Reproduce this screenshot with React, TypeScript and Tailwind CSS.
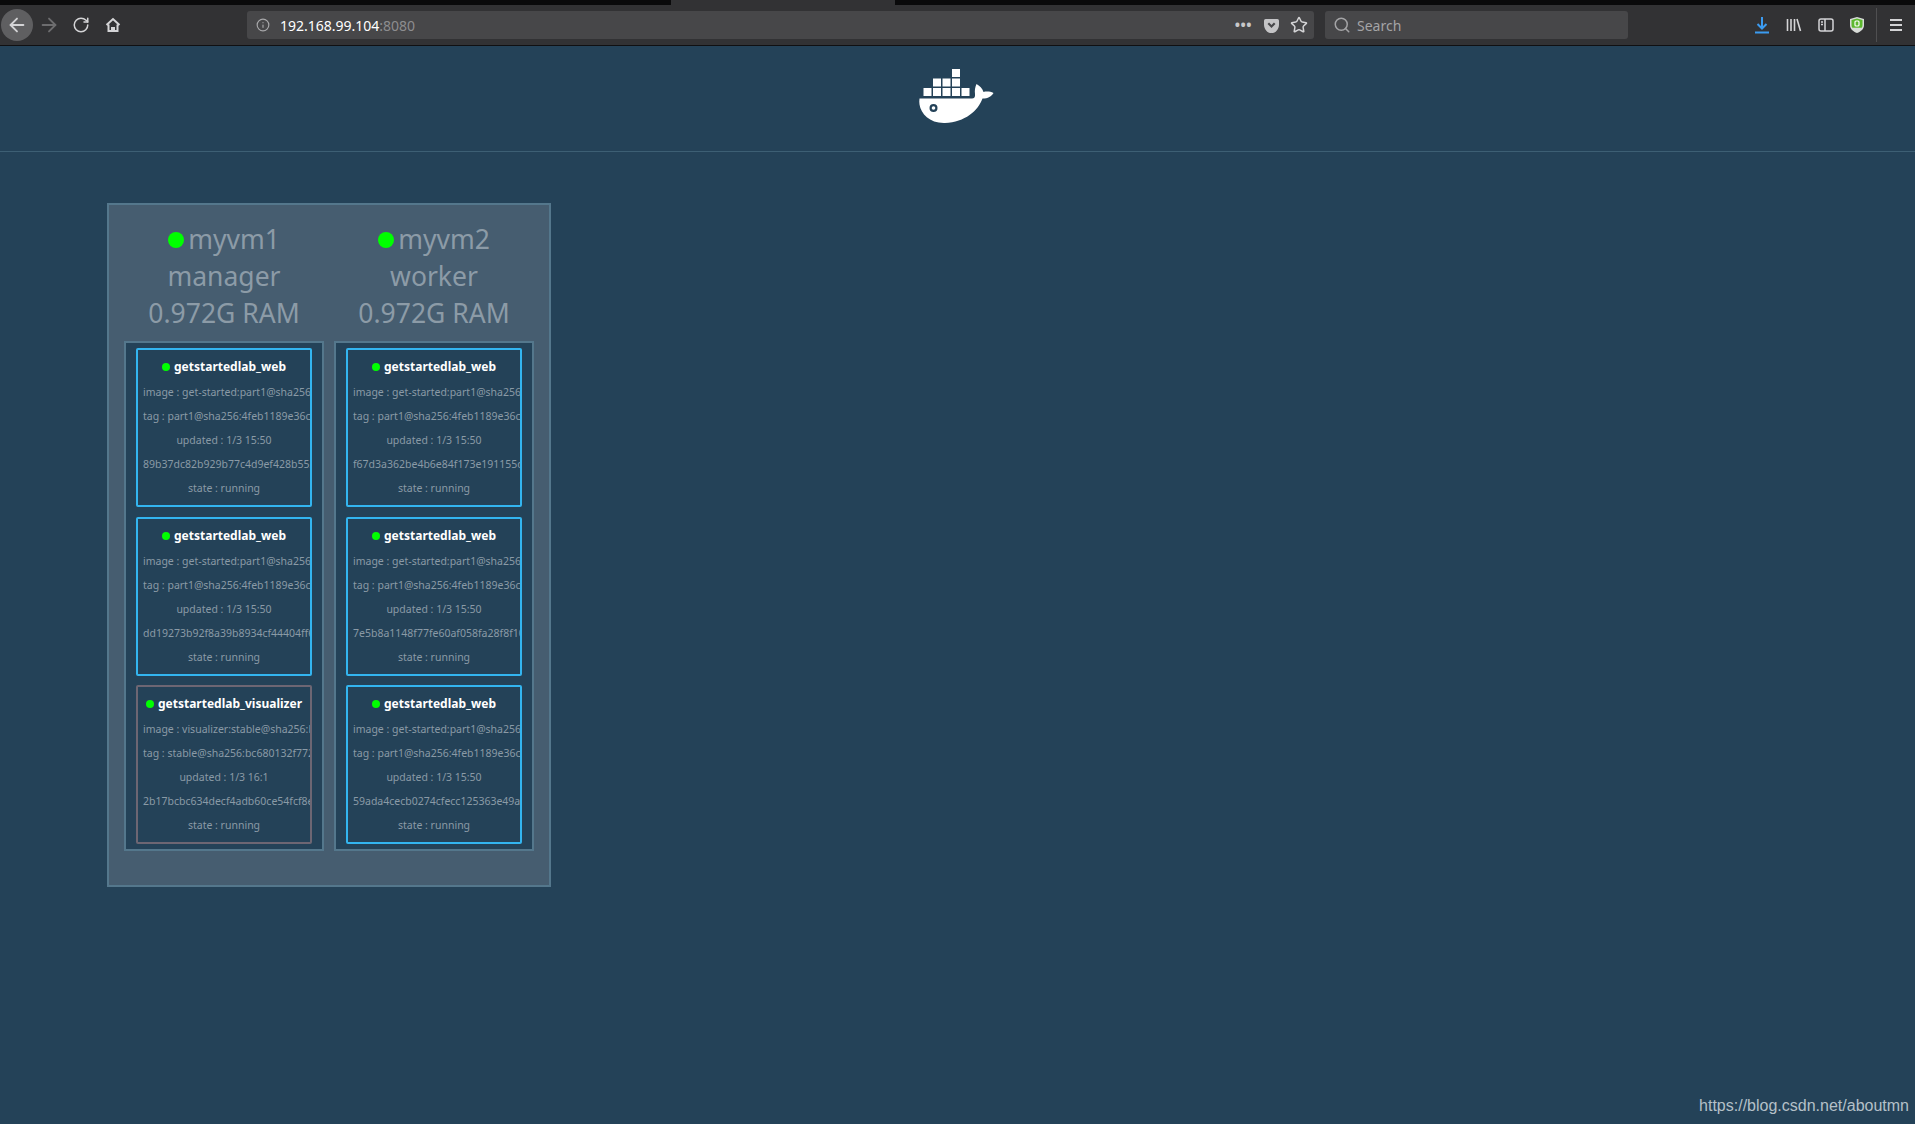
import { ArrowLeft, ArrowRight, RotateCw, Info, Star, Search } from 'lucide-react';

type Task = {
  name: string;
  image: string;
  tag: string;
  updated: string;
  id: string;
  visualizer?: boolean;
};

type Node = {
  name: string;
  role: string;
  tasks: Task[];
};

const web = (id: string): Task => ({
  name: 'getstartedlab_web',
  image: 'get-started:part1@sha256:4feb1189e36cc',
  tag: 'part1@sha256:4feb1189e36cc7a2f4',
  updated: '1/3 15:50',
  id,
});

const nodes: Node[] = [
  {
    name: 'myvm1',
    role: 'manager',
    tasks: [
      web('89b37dc82b929b77c4d9ef428b5520'),
      web('dd19273b92f8a39b8934cf44404ff60'),
      {
        name: 'getstartedlab_visualizer',
        image: 'visualizer:stable@sha256:bc680132f772',
        tag: 'stable@sha256:bc680132f7729e1',
        updated: '1/3 16:1',
        id: '2b17bcbc634decf4adb60ce54fcf8e1a',
        visualizer: true,
      },
    ],
  },
  {
    name: 'myvm2',
    role: 'worker',
    tasks: [
      web('f67d3a362be4b6e84f173e191155d70'),
      web('7e5b8a1148f77fe60af058fa28f8f10a'),
      web('59ada4cecb0274cfecc125363e49a12'),
    ],
  },
];

function Whale() {
  return (
    <svg width="76" height="55" viewBox="0 0 76 55" fill="#fff">
      <rect x="34" y="0" width="8" height="8" />
      <rect x="15" y="9.5" width="8" height="8" />
      <rect x="24.5" y="9.5" width="8" height="8" />
      <rect x="34" y="9.5" width="8" height="8" />
      <rect x="5.5" y="19" width="8" height="8" />
      <rect x="15" y="19" width="8" height="8" />
      <rect x="24.5" y="19" width="8" height="8" />
      <rect x="34" y="19" width="8" height="8" />
      <rect x="43.5" y="19" width="8" height="8" />
      <path
        fillRule="evenodd"
        d="M1.5 29.5H54c2 0 3.5-1.5 3-4.5-.5-3 0-7 1.5-10 3 1.500 6 4.500 7 8 3-.8 7-.5 10 1-2 3.500-5.500 5.500-11 5.500C60 42 47 53 27 54 12 54.500 3 45 1.500 35.500c-.3-2-.3-4 0-6ZM15.500 35a4 4 0 1 0 0 8 4 4 0 0 0 0-8Z"
      />
      <circle cx="15.5" cy="39" r="1.8" />
    </svg>
  );
}

function TaskCard({ task }: { task: Task }) {
  return (
    <div
      className={`h-[159px] overflow-hidden rounded-[2px] border-2 pt-[7px] ${
        task.visualizer ? 'border-[#6d6673]' : 'border-[#33b5f0]'
      }`}
    >
      <div className="flex h-[20px] items-center justify-center text-[12px] font-bold text-white">
        <span className="mr-[4px] h-[8px] w-[8px] rounded-full bg-[#00ff00]" />
        {task.name}
      </div>
      <div className="whitespace-nowrap text-[10.5px] text-[#8a9aa6]">
        <div className="mt-[3px] h-[24px] pl-[5px] leading-[24px]">image : {task.image}</div>
        <div className="h-[24px] pl-[5px] leading-[24px]">tag : {task.tag}</div>
        <div className="h-[24px] text-center leading-[24px]">updated : {task.updated}</div>
        <div className="h-[24px] pl-[5px] leading-[24px]">{task.id}</div>
        <div className="h-[24px] text-center leading-[24px]">state : running</div>
      </div>
    </div>
  );
}

function NodeColumn({ node }: { node: Node }) {
  return (
    <div className="w-[200px]">
      <div className="h-[121px] pt-px text-center text-[26.5px] leading-[37px] text-[#8c9ba7]">
        <div className="flex items-center justify-center">
          <span className="mr-[4px] h-[16px] w-[16px] rounded-full bg-[#00ff00]" />
          {node.name}
        </div>
        <div>{node.role}</div>
        <div>0.972G RAM</div>
      </div>
      <div className="flex h-[510px] flex-col gap-[9.5px] border-2 border-[#54778c] bg-[#244258] px-[10px] pt-[5px]">
        {node.tasks.map((task) => (
          <TaskCard key={task.id} task={task} />
        ))}
      </div>
    </div>
  );
}

function Toolbar() {
  return (
    <div className="flex h-[46px] flex-col bg-[#323234]">
      <div className="flex h-[5px] bg-[#0a0a0b]">
        <div className="ml-[671px] h-full w-[224px] bg-[#323234]" />
      </div>
      <div className="flex h-[40px] items-center text-[#d4d4d6]">
        <div className="ml-px flex h-[32px] w-[32px] items-center justify-center rounded-full bg-[#5f5f61]">
          <ArrowLeft size={22} strokeWidth={2} />
        </div>
        <ArrowRight size={22} strokeWidth={2} className="ml-[5px] text-[#6d6d6f]" />
        <RotateCw size={18} strokeWidth={2} className="ml-[12px]" />
        <svg width="16" height="16" viewBox="0 0 16 16" fill="none" stroke="currentColor" strokeWidth="2" className="ml-[15px]">
          <path d="M1.5 8 8 2l6.5 6M3.5 7.500V14h9V7.500" />
          <path d="M7 14v-3h2v3" />
        </svg>
        <div className="ml-[126px] flex h-[28px] w-[1067px] items-center rounded-[3px] bg-[#474749] pl-[9px] pr-[6px]">
          <Info size={14} className="text-[#a8a8aa]" />
          <span className="ml-[10px] text-[14px] text-white font-['Noto_Sans',sans-serif]">
            192.168.99.104<span className="text-[#8d8d8f]">:8080</span>
          </span>
          <div className="ml-auto flex items-center">
            <span className="text-[14px] font-bold leading-none tracking-[0.5px] text-[#c8c8ca]">•••</span>
            <svg width="15" height="15" viewBox="0 0 14 14" fill="#c4c4c6" className="ml-[12px]">
              <path d="M1.5 1h11A1.500 1.500 0 0 1 14 2.500V6c0 4.500-3 8-7 8S0 10.500 0 6V2.500A1.500 1.500 0 0 1 1.500 1Z" />
              <path d="m4 5 3 3 3-3" fill="none" stroke="#474749" strokeWidth="2" />
            </svg>
            <Star size={18} strokeWidth={2} className="ml-[11px]" />
          </div>
        </div>
        <div className="ml-[11px] flex h-[28px] w-[303px] items-center rounded-[3px] bg-[#474749] pl-[8px] text-[14px] text-[#a4a4a6]">
          <Search size={18} />
          <span className="ml-[6px]">Search</span>
        </div>
        <svg width="14" height="18" viewBox="0 0 14 18" fill="none" stroke="#3b9bf0" strokeWidth="2" className="ml-[127px]">
          <path d="M7 1v11M2.5 8 7 12.500 11.500 8M0 16.500h14" />
        </svg>
        <svg width="16" height="16" viewBox="0 0 16 16" fill="none" stroke="currentColor" strokeWidth="1.6" className="ml-[17px]">
          <path d="M1.5 2v12M5 2v12M8.500 2v12M11 2l3.500 12" />
        </svg>
        <svg width="16" height="14" viewBox="0 0 16 14" fill="none" stroke="currentColor" strokeWidth="1.5" className="ml-[16px]">
          <rect x="1" y="1" width="14" height="12" rx="2" />
          <path d="M7 1v12" />
          <path d="M3 4h2M3 6.500h2" />
        </svg>
        <svg width="14" height="16" viewBox="0 0 14 16" className="ml-[16px]">
          <path d="M7 0 14 2v6c0 4-3 6.500-7 8-4-1.500-7-4-7-8V2Z" fill="#d8dcd8" />
          <path d="M7 1.500 12.500 3v5c0 1-.2 2-.8 2.800H2.300C1.700 10 1.500 9 1.500 8V3Z" fill="#5cb82e" />
          <rect x="5" y="4" width="4" height="5" rx="1" fill="none" stroke="#fff" strokeWidth="1.2" />
        </svg>
        <div className="ml-[12px] h-[34px] w-px bg-[#4f4f51]" />
        <svg width="12" height="12" viewBox="0 0 12 12" stroke="currentColor" strokeWidth="2" className="ml-[13px]">
          <path d="M0 1h12M0 6h12M0 11h12" />
        </svg>
      </div>
      <div className="h-px bg-[#101012]" />
    </div>
  );
}

export default function App() {
  return (
    <div className="flex h-[1124px] flex-col overflow-hidden bg-[#244258] font-['Noto_Sans','Open_Sans',sans-serif]">
      <Toolbar />
      <div className="flex h-[106px] items-center justify-center border-b border-[#3d5f74] pr-[4px] pb-[4px]">
        <Whale />
      </div>
      <div className="pl-[107px] pt-[51px]">
        <div className="flex h-[684px] w-[444px] gap-[10px] border-2 border-[#54778c] bg-[#465d70] pl-[15px] pt-[15px]">
          {nodes.map((node) => (
            <NodeColumn key={node.name} node={node} />
          ))}
        </div>
      </div>
      <div className="absolute right-[6px] top-[1094px] font-['Liberation_Sans',sans-serif] text-[16px] text-[#b4c0c8]">
        https://blog.csdn.net/aboutmn
      </div>
    </div>
  );
}
